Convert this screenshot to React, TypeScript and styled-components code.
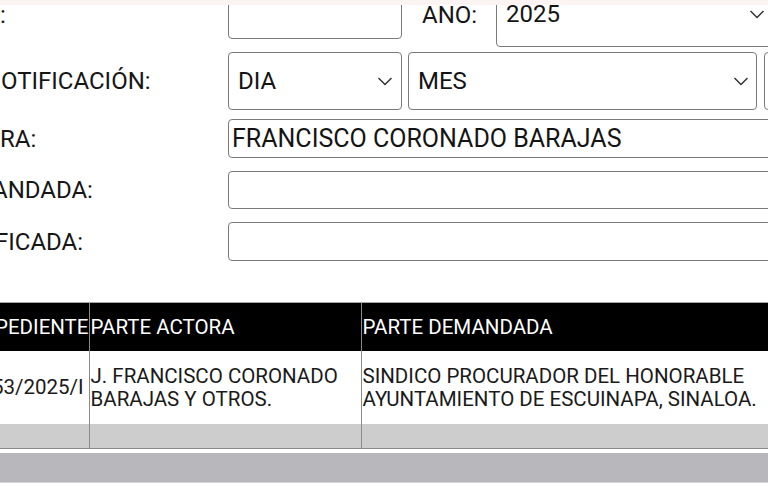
import styled, { createGlobalStyle } from "styled-components";

const GlobalStyle = createGlobalStyle`
  html, body {
    margin: 0;
    padding: 0;
    background: #ffffff;
    overflow: hidden;
    font-family: Roboto, "Liberation Sans", Arial, sans-serif;
    color: #111;
  }
`;

const Page = styled.div`
  width: 768px;
  height: 500px;
  overflow: hidden;
  position: relative;
`;

// franja rosada que asoma arriba
const TopStrip = styled.div`
  position: absolute;
  top: 0;
  left: 0;
  right: 0;
  height: 5px;
  background: #fcf3f3;
  z-index: 2;
`;

const Form = styled.div`
  margin-top: -19px;
  display: flex;
  flex-direction: column;
`;

const Row = styled.div<{ $gap: number; $height: number; $align?: string }>`
  display: flex;
  align-items: ${(p) => p.$align || "center"};
  height: ${(p) => p.$height}px;
  margin-top: ${(p) => p.$gap}px;
`;

const Label = styled.div<{ $top?: number; $shift?: number }>`
  width: 228px;
  flex: none;
  font-size: 24px;
  color: #161616;
  white-space: nowrap;
  overflow: hidden;
  margin-top: ${(p) => p.$top ?? 0}px;
  text-indent: ${(p) => p.$shift ?? 0}px;
`;

const InlineLabel = styled.div`
  font-size: 24px;
  color: #161616;
  margin: 20px 19px 0 20px;
  white-space: nowrap;
`;

const TextBox = styled.div<{ $width?: number; $height: number }>`
  box-sizing: border-box;
  width: ${(p) => (p.$width ? `${p.$width}px` : "600px")};
  height: ${(p) => p.$height}px;
  flex: none;
  border: 1px solid #7a7a7a;
  border-radius: 4px;
  padding: 0 3px;
  font-size: 25px;
  color: #141414;
  display: flex;
  align-items: center;
  white-space: nowrap;
  background: #fff;
`;

const SelectBox = styled.div<{ $width: number; $height: number }>`
  position: relative;
  box-sizing: border-box;
  width: ${(p) => p.$width}px;
  height: ${(p) => p.$height}px;
  flex: none;
  border: 1px solid #7a7a7a;
  border-radius: 4px;
  padding: 0 34px 0 9px;
  font-size: 24px;
  color: #141414;
  display: flex;
  align-items: center;
  background: #fff;
`;

const Arrow = styled.svg<{ $right: number }>`
  position: absolute;
  right: ${(p) => p.$right}px;
  top: 50%;
  margin-top: -4px;
  width: 16px;
  height: 9px;
`;

const Chevron = ({ right }: { right: number }) => (
  <Arrow $right={right} viewBox="0 0 16 9">
    <polyline points="1.5,1 8,7.5 14.5,1" fill="none" stroke="#333" strokeWidth="1.5" />
  </Arrow>
);

const Spacer = styled.div<{ $w: number }>`
  width: ${(p) => p.$w}px;
  flex: none;
`;

const Table = styled.table`
  margin-top: 41px;
  border-collapse: collapse;
  table-layout: fixed;
  width: 900px;
  font-size: 20.5px;
`;

const HeadCell = styled.th`
  background: #000;
  color: #fff;
  font-weight: 400;
  height: 48px;
  padding: 0 0 0 1px;
  text-align: left;
  border-top: 1px solid #a8a8a8;
  border-left: 1px solid #8a8a8a;
  white-space: nowrap;
  overflow: hidden;
  &:first-child {
    border-left: none;
    padding: 0;
  }
`;

const Cell = styled.td`
  height: 73px;
  padding: 0 0 0 1px;
  text-align: left;
  vertical-align: middle;
  line-height: 23px;
  color: #1a1a1a;
  border-left: 1px solid #8a8a8a;
  overflow: hidden;
  &:first-child {
    border-left: none;
    padding: 0;
  }
`;

// texto del expediente pegado a la derecha; lo que sobra se corta a la izquierda
const EndText = styled.div<{ $pad: number }>`
  display: flex;
  justify-content: flex-end;
  white-space: nowrap;
  overflow: hidden;
  padding-right: ${(p) => p.$pad}px;
`;

const GrayCell = styled.td`
  height: 24px;
  padding: 0;
  background: #cdcdcd;
  border-left: 1px solid #8a8a8a;
  border-bottom: 1px solid #8a8a8a;
  &:first-child {
    border-left: none;
  }
`;

const Band = styled.div`
  margin-top: 4px;
  height: 29px;
  background: #b8b8bc;
  border-bottom: 1px solid #d6d6d8;
`;

export default function App() {
  return (
    <Page>
      <GlobalStyle />
      <TopStrip />
      <Form>
        <Row $gap={0} $height={66} $align="flex-start">
          <Label $top={20}>:</Label>
          <TextBox $width={174} $height={58} />
          <InlineLabel>AÑO:</InlineLabel>
          <SelectBox $width={300} $height={66}>
            2025
            <Chevron right={30} />
          </SelectBox>
        </Row>
        <Row $gap={5} $height={58}>
          <Label $shift={1}>OTIFICACIÓN:</Label>
          <SelectBox $width={174} $height={58}>
            DIA
            <Chevron right={8} />
          </SelectBox>
          <Spacer $w={6} />
          <SelectBox $width={349} $height={58}>
            MES
            <Chevron right={7} />
          </SelectBox>
          <Spacer $w={7} />
          <SelectBox $width={200} $height={58} />
        </Row>
        <Row $gap={9} $height={39}>
          <Label>RA:</Label>
          <TextBox $height={39}>FRANCISCO CORONADO BARAJAS</TextBox>
        </Row>
        <Row $gap={13} $height={38}>
          <Label $shift={-8}>ANDADA:</Label>
          <TextBox $height={38} />
        </Row>
        <Row $gap={13} $height={39}>
          <Label $shift={-5}>FICADA:</Label>
          <TextBox $height={39} />
        </Row>
      </Form>
      <Table>
        <colgroup>
          <col style={{ width: 89 }} />
          <col style={{ width: 272 }} />
          <col />
        </colgroup>
        <thead>
          <tr>
            <HeadCell>
              <EndText $pad={0}>PEDIENTE</EndText>
            </HeadCell>
            <HeadCell>PARTE ACTORA</HeadCell>
            <HeadCell>PARTE DEMANDADA</HeadCell>
          </tr>
        </thead>
        <tbody>
          <tr>
            <Cell>
              <EndText $pad={5}>53/2025/I</EndText>
            </Cell>
            <Cell>J. FRANCISCO CORONADO BARAJAS Y OTROS.</Cell>
            <Cell>
              SINDICO PROCURADOR DEL HONORABLE
              <br />
              AYUNTAMIENTO DE ESCUINAPA, SINALOA.
            </Cell>
          </tr>
          <tr>
            <GrayCell />
            <GrayCell />
            <GrayCell />
          </tr>
        </tbody>
      </Table>
      <Band />
    </Page>
  );
}
